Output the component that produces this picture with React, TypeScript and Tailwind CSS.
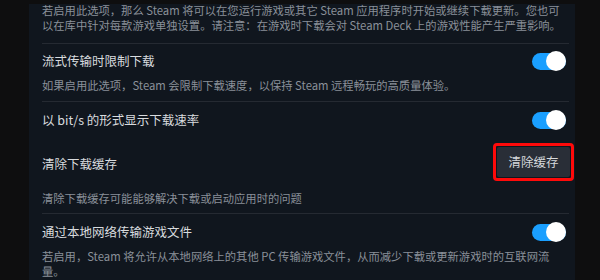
import React from "react";

const font = { fontFamily: '"Noto Sans CJK SC", "Noto Sans", sans-serif' };

function Toggle() {
  return (
    <div className="relative w-[34px] h-[20px] flex items-center shrink-0">
      <div className="w-[34px] h-[17px] rounded-full bg-[#1a9fff]" />
      <div className="absolute right-0 top-0 w-[20px] h-[20px] rounded-full bg-white" />
    </div>
  );
}

function Divider() {
  return <div className="h-px bg-[#252a32] mr-[6px]" />;
}

function Title({ children }: { children: React.ReactNode }) {
  return <div className="text-[12.5px] leading-[20px] text-[#d8dbde] whitespace-nowrap">{children}</div>;
}

function Desc({ lines }: { lines: string[] }) {
  return (
    <div className="text-[11.3px] leading-[15px] text-[#8a9099]">
      {lines.map((l, i) => (
        <div key={i} className="whitespace-nowrap">{l}</div>
      ))}
    </div>
  );
}

export default function App() {
  return (
    <div className="w-[600px] h-[280px] overflow-hidden bg-[#0e0e0f] flex flex-col" style={font}>
      <div className="h-[4px] shrink-0 bg-[#0e0e0f]" />
      <div className="ml-[29px] w-[546px] flex-1 bg-[#10161e] pl-[13px] flex flex-col overflow-hidden">
        <div className="-mt-[1px] pb-[10px]">
          <Desc
            lines={[
              "若启用此选项，那么 Steam 将可以在您运行游戏或其它 Steam 应用程序时开始或继续下载更新。您也可",
              "以在库中针对每款游戏单独设置。请注意：在游戏时下载会对 Steam Deck 上的游戏性能产生严重影响。",
            ]}
          />
        </div>
        <Divider />
        <div className="pt-[7px] pb-[8px] pr-[9px]">
          <div className="flex items-center justify-between">
            <Title>流式传输时限制下载</Title>
            <Toggle />
          </div>
          <div className="mt-[7px]">
            <Desc lines={["如果启用此选项，Steam 会限制下载速度，以保持 Steam 远程畅玩的高质量体验。"]} />
          </div>
        </div>
        <Divider />
        <div className="pt-[8px] pb-[8px] pr-[9px]">
          <div className="flex items-center justify-between">
            <Title>以 bit/s 的形式显示下载速率</Title>
            <Toggle />
          </div>
        </div>
        <div className="pt-[9px] pb-[7px] pr-[5px]">
          <div className="flex items-start justify-between">
            <div className="mt-[7px]">
              <Title>清除下载缓存</Title>
            </div>
            <div className="relative">
              <div className="absolute -inset-[4px] rounded-[4px] border-[3px] border-[#ff0a0a]" />
              <div className="w-[73px] h-[30px] rounded-[2px] bg-[#292e37] flex items-center justify-center text-[12.5px] text-[#d6d9dc]">
                清除缓存
              </div>
            </div>
          </div>
          <div className="mt-[14px]">
            <Desc lines={["清除下载缓存可能能够解决下载或启动应用时的问题"]} />
          </div>
        </div>
        <Divider />
        <div className="pt-[8px] pr-[9px]">
          <div className="flex items-center justify-between">
            <Title>通过本地网络传输游戏文件</Title>
            <Toggle />
          </div>
          <div className="mt-[7px]">
            <Desc
              lines={[
                "若启用，Steam 将允许从本地网络上的其他 PC 传输游戏文件，从而减少下载或更新游戏时的互联网流",
                "量。",
              ]}
            />
          </div>
        </div>
      </div>
    </div>
  );
}
